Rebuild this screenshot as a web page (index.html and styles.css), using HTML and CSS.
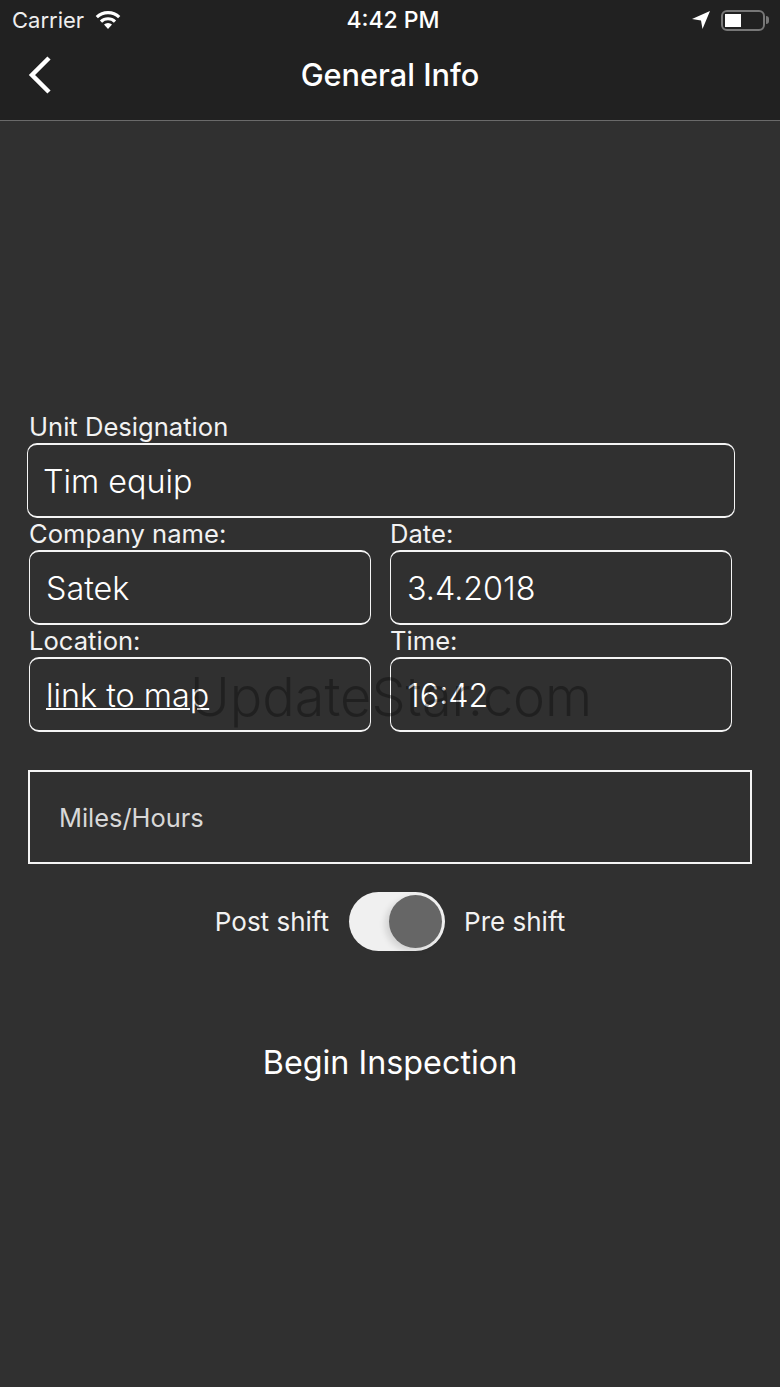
FILE: index.html
```html
<!DOCTYPE html>
<html lang="en">
  <head>
    <meta charset="UTF-8" />
    <meta name="viewport" content="width=device-width, initial-scale=1.0" />
    <title>General Info</title>
    <link rel="stylesheet" href="styles.css">
  </head>
  <body>
    <header class="top-bar">
      <div class="status-bar">
        <div class="status-left">
          <span>Carrier</span>
          <svg class="wifi" width="28" height="20" viewBox="0 0 26 20">
            <path d="M13 19 L9 14.6 A5.8 5.8 0 0 1 17 14.6 Z" fill="#fff"/>
            <path d="M6 11.6 A10 10 0 0 1 20 11.6" fill="none" stroke="#fff" stroke-width="3.2"/>
            <path d="M1.8 7.2 A16 16 0 0 1 24.2 7.2" fill="none" stroke="#fff" stroke-width="3.2"/>
          </svg>
        </div>
        <div class="status-time">4:42 PM</div>
        <div class="status-right">
          <svg width="20" height="20" viewBox="0 0 20 20">
            <path d="M1 9 L19 1 L11.5 19 L10 10.5 Z" fill="#fff"/>
          </svg>
          <div class="battery"><div class="battery-level"></div></div>
          <div class="battery-tip"></div>
        </div>
      </div>
      <div class="nav-bar">
        <svg class="back" width="26" height="40" viewBox="0 0 26 40">
          <path d="M22 3 L5 20 L22 37" fill="none" stroke="#fff" stroke-width="4.5"/>
        </svg>
        <h1>General Info</h1>
      </div>
    </header>

    <main class="content">
      <form class="info-form">
        <label class="field-label">Unit Designation</label>
        <div class="box box-wide">Tim equip</div>

        <div class="field-row">
          <div class="field">
            <label class="field-label">Company name:</label>
            <div class="box">Satek</div>
          </div>
          <div class="field">
            <label class="field-label">Date:</label>
            <div class="box">3.4.2018</div>
          </div>
        </div>

        <div class="field-row">
          <div class="field">
            <label class="field-label">Location:</label>
            <div class="box"><a href="#">link to map</a></div>
          </div>
          <div class="field">
            <label class="field-label">Time:</label>
            <div class="box">16:42</div>
          </div>
        </div>

        <div class="miles">Miles/Hours</div>

        <div class="shift-row">
          <span>Post shift</span>
          <div class="switch"><div class="knob"></div></div>
          <span>Pre shift</span>
        </div>

        <button type="button" class="begin">Begin Inspection</button>
      </form>
    </main>

    <div class="watermark">UpdateStar.com</div>
  </body>
</html>
```

FILE: styles.css
```css
body {
  font-family: Inter, "Liberation Sans", sans-serif;
  margin: 0;
  padding: 0;
  background-color: #303030;
  color: #fff;
  height: 1387px;
  overflow: hidden;
  position: relative;
}
.top-bar {
  background-color: #212121;
  border-bottom: 1px solid #6a6a6a;
  height: 120px;
}
.status-bar {
  height: 40px;
  display: flex;
  justify-content: space-between;
  align-items: center;
  padding: 0 12px;
  font-size: 22px;
  position: relative;
}
.status-left {
  display: flex;
  align-items: center;
  gap: 10px;
  color: #eee;
}
.status-time {
  position: absolute;
  left: 0;
  right: 0;
  text-align: center;
  font-size: 23px;
  font-weight: 500;
  margin-left: 6px;
}
.status-right {
  display: flex;
  align-items: center;
}
.status-right svg {
  margin-right: -2px;
}
.battery {
  width: 44px;
  height: 21px;
  box-sizing: border-box;
  border: 2px solid #777;
  border-radius: 6px;
  padding: 2px;
  margin-left: 12px;
}
.battery-level {
  width: 16px;
  height: 100%;
  background-color: #fff;
}
.battery-tip {
  width: 3px;
  height: 8px;
  margin-left: 1px;
  margin-right: -1px;
  background-color: #777;
  border-radius: 0 3px 3px 0;
}
.nav-bar {
  height: 70px;
  position: relative;
  display: flex;
  align-items: center;
  justify-content: center;
}
.nav-bar h1 {
  margin: -2px 0 0;
  font-size: 30.7px;
  font-weight: 500;
}
.back {
  position: absolute;
  left: 27px;
  top: 15px;
}
.content {
  padding: 290px 0 0 29px;
}
.field-label {
  display: block;
  font-size: 25.6px;
  line-height: 32px;
  height: 32px;
  color: #f2f2f2;
}
.box {
  box-sizing: border-box;
  height: 75px;
  padding: 1px 0 0 16px;
  border: solid #f4f4f4;
  border-width: 2px 1px;
  border-radius: 10px;
  display: flex;
  align-items: center;
  font-size: 32.3px;
  font-weight: 300;
}
.box a {
  color: #fff;
  text-decoration-thickness: 2px;
}
.box-wide {
  width: 708px;
  margin-left: -2px;
  padding-left: 15px;
}
.field-row {
  display: flex;
  gap: 19px;
}
.field {
  width: 342px;
}
.miles {
  box-sizing: border-box;
  width: 724px;
  height: 94px;
  margin-top: 38px;
  margin-left: -1px;
  border: 2px solid #f4f4f4;
  padding-left: 29px;
  display: flex;
  align-items: center;
  font-size: 25.4px;
  color: #d8d8d8;
}
.shift-row {
  width: 722px;
  margin-top: 28px;
  display: flex;
  justify-content: center;
  align-items: center;
  gap: 19.5px;
  font-size: 26px;
  color: #f2f2f2;
}
.switch {
  width: 96px;
  height: 59px;
  box-sizing: border-box;
  border-radius: 30px;
  background-color: #f0f0f0;
  padding: 3px;
  display: flex;
  justify-content: flex-end;
}
.knob {
  width: 53px;
  height: 53px;
  border-radius: 50%;
  background-color: #666;
  box-shadow: -4px 3px 6px rgba(0, 0, 0, 0.12);
}
.begin {
  display: block;
  width: 722px;
  margin-top: 91px;
  padding: 0;
  background: none;
  border: none;
  color: #fff;
  font-family: inherit;
  font-size: 32.3px;
  line-height: 42px;
}
.watermark {
  position: absolute;
  left: 190px;
  top: 666px;
  font-size: 54px;
  line-height: 62px;
  font-weight: 300;
  color: rgba(0, 0, 0, 0.32);
  white-space: nowrap;
}
```
